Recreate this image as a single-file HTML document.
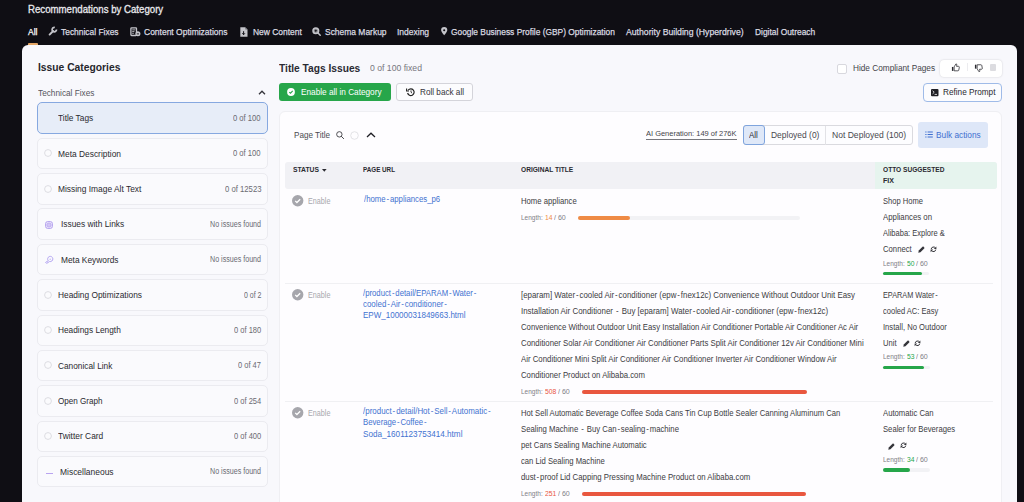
<!DOCTYPE html>
<html><head><meta charset="utf-8"><style>
html,body{margin:0;padding:0;}
body{width:1024px;height:502px;overflow:hidden;position:relative;background:#0f0e14;font-family:"Liberation Sans",sans-serif;}
.t{position:absolute;white-space:nowrap;transform-origin:0 0;}
svg{position:absolute;overflow:visible;}
</style></head><body>
<svg style="left:48px;top:26px" width="10" height="10" viewBox="0 0 10 10"><path d="M1.6 8.6L5.2 5" stroke="#c4c4ca" stroke-width="1.9" stroke-linecap="round"/><path d="M8.5 3.6A2.2 2.2 0 1 1 6.8 1.5" fill="none" stroke="#c4c4ca" stroke-width="1.7"/></svg>
<svg style="left:129.5px;top:26.8px" width="11" height="10" viewBox="0 0 11 10"><rect x="0.9" y="0.9" width="5.6" height="7.6" rx="0.7" fill="none" stroke="#c4c4ca" stroke-width="1.3"/><path d="M2.2 2.9h3.2M2.2 4.6h2.2M2.2 6.3h1.6" stroke="#c4c4ca" stroke-width="0.9"/><circle cx="7.9" cy="6.8" r="2.5" fill="#c4c4ca"/><path d="M6.8 6.9h2.2" stroke="#0f0e14" stroke-width="0.9"/></svg>
<svg style="left:239.8px;top:26.7px" width="8" height="10" viewBox="0 0 8 10"><path d="M0.3 0.3h4.9l2.3 2.3v7.1H0.3z" fill="#c4c4ca"/><path d="M5.4 0.5v2.1h2.1" fill="#6a6a70"/><path d="M3.6 4.2v3.4M2.3 6.3l1.3 1.4l1.3-1.4" stroke="#0f0e14" stroke-width="1" fill="none"/></svg>
<svg style="left:311.8px;top:26.6px" width="9" height="9" viewBox="0 0 9 9"><circle cx="3.8" cy="3.8" r="2.8" fill="#8a8a90" stroke="#c4c4ca" stroke-width="1.5"/><path d="M3.8 2.4L4.3 3.3L5.2 3.8L4.3 4.3L3.8 5.2L3.3 4.3L2.4 3.8L3.3 3.3z" fill="#0f0e14"/><path d="M6 6l2.2 2.2" stroke="#c4c4ca" stroke-width="1.5" stroke-linecap="round"/></svg>
<svg style="left:440.8px;top:27px" width="6.4" height="8.4" viewBox="0 0 6.4 8.4"><path d="M3.2 8.3C1.3 6 0.1 4.6 0.1 3.1A3.1 3.1 0 0 1 6.3 3.1C6.3 4.6 5.1 6 3.2 8.3z" fill="#c4c4ca"/><circle cx="3.2" cy="3.2" r="1.05" fill="#0f0e14"/></svg>
<div style="position:absolute;left:28px;top:42.5px;width:10px;height:3.0px;background:#e5a766;border-radius:1px 1px 0 0;"></div>
<div style="position:absolute;left:22px;top:45px;width:995px;height:495px;background:#f8f8fc;border-radius:6px;"></div>
<svg style="left:257.6px;top:90px" width="8" height="5" viewBox="0 0 8 5"><path d="M1 4.2L4 1.2L7 4.2" fill="none" stroke="#33333a" stroke-width="1.3"/></svg>
<div style="position:absolute;left:37px;top:102.4px;width:230.5px;height:31.599999999999994px;box-sizing:border-box;background:#e7edf8;border:1px solid #86a8e0;border-radius:5px;"></div>
<div style="position:absolute;left:37px;top:137.76px;width:230.5px;height:31.400000000000006px;box-sizing:border-box;background:#fafafd;border:1px solid #ebebf0;border-radius:5px;"></div>
<svg style="left:44px;top:149.26px" width="8" height="8" viewBox="0 0 8 8"><circle cx="4" cy="4" r="3.4" fill="#fbfbfd" stroke="#d6d6dc" stroke-width="0.8"/></svg>
<div style="position:absolute;left:37px;top:173.12px;width:230.5px;height:31.400000000000006px;box-sizing:border-box;background:#fafafd;border:1px solid #ebebf0;border-radius:5px;"></div>
<svg style="left:44px;top:184.62px" width="8" height="8" viewBox="0 0 8 8"><circle cx="4" cy="4" r="3.4" fill="#fbfbfd" stroke="#d6d6dc" stroke-width="0.8"/></svg>
<div style="position:absolute;left:37px;top:208.48000000000002px;width:230.5px;height:31.400000000000006px;box-sizing:border-box;background:#fafafd;border:1px solid #ebebf0;border-radius:5px;"></div>
<svg style="left:45px;top:221.28px" width="8" height="8" viewBox="0 0 8 8"><rect x="0.6" y="0.6" width="6.8" height="6.8" rx="2" fill="#ece6fb" stroke="#b3a0ee" stroke-width="1"/><rect x="2" y="2.2" width="4" height="3.6" rx="1.4" fill="#d3c6f6" stroke="#b3a0ee" stroke-width="0.7"/></svg>
<div style="position:absolute;left:37px;top:243.84px;width:230.5px;height:31.400000000000006px;box-sizing:border-box;background:#fafafd;border:1px solid #ebebf0;border-radius:5px;"></div>
<svg style="left:45px;top:255.74px" width="8" height="8" viewBox="0 0 8 8"><path d="M3.3 4.7A2.6 2.6 0 1 1 4.6 5.5L1.6 7.4L0.6 6.4z" fill="none" stroke="#ab9cef" stroke-width="0.9" stroke-linejoin="round"/><circle cx="5.2" cy="3.2" r="0.8" fill="#c9bdf5"/></svg>
<div style="position:absolute;left:37px;top:279.20000000000005px;width:230.5px;height:31.399999999999977px;box-sizing:border-box;background:#fafafd;border:1px solid #ebebf0;border-radius:5px;"></div>
<svg style="left:44px;top:290.70px" width="8" height="8" viewBox="0 0 8 8"><circle cx="4" cy="4" r="3.4" fill="#fbfbfd" stroke="#d6d6dc" stroke-width="0.8"/></svg>
<div style="position:absolute;left:37px;top:314.56px;width:230.5px;height:31.399999999999977px;box-sizing:border-box;background:#fafafd;border:1px solid #ebebf0;border-radius:5px;"></div>
<svg style="left:44px;top:326.06px" width="8" height="8" viewBox="0 0 8 8"><circle cx="4" cy="4" r="3.4" fill="#fbfbfd" stroke="#d6d6dc" stroke-width="0.8"/></svg>
<div style="position:absolute;left:37px;top:349.91999999999996px;width:230.5px;height:31.399999999999977px;box-sizing:border-box;background:#fafafd;border:1px solid #ebebf0;border-radius:5px;"></div>
<svg style="left:44px;top:361.42px" width="8" height="8" viewBox="0 0 8 8"><circle cx="4" cy="4" r="3.4" fill="#fbfbfd" stroke="#d6d6dc" stroke-width="0.8"/></svg>
<div style="position:absolute;left:37px;top:385.28px;width:230.5px;height:31.399999999999977px;box-sizing:border-box;background:#fafafd;border:1px solid #ebebf0;border-radius:5px;"></div>
<svg style="left:44px;top:396.78px" width="8" height="8" viewBox="0 0 8 8"><circle cx="4" cy="4" r="3.4" fill="#fbfbfd" stroke="#d6d6dc" stroke-width="0.8"/></svg>
<div style="position:absolute;left:37px;top:420.64px;width:230.5px;height:31.399999999999977px;box-sizing:border-box;background:#fafafd;border:1px solid #ebebf0;border-radius:5px;"></div>
<svg style="left:44px;top:432.14px" width="8" height="8" viewBox="0 0 8 8"><circle cx="4" cy="4" r="3.4" fill="#fbfbfd" stroke="#d6d6dc" stroke-width="0.8"/></svg>
<div style="position:absolute;left:37px;top:456.0px;width:230.5px;height:31.399999999999977px;box-sizing:border-box;background:#fafafd;border:1px solid #ebebf0;border-radius:5px;"></div>
<div style="position:absolute;left:45.5px;top:472.5px;width:7.5px;height:1.1999999999999886px;background:#b9a4f0;"></div>
<div style="position:absolute;left:279px;top:83px;width:112px;height:18px;background:#27a64a;border-radius:3px;"></div>
<svg style="left:287.4px;top:88px" width="8" height="8" viewBox="0 0 8 8"><circle cx="4" cy="4" r="3.9" fill="#fff"/><path d="M2.3 4.1L3.5 5.2L5.7 2.9" fill="none" stroke="#27a64a" stroke-width="1.1"/></svg>
<div style="position:absolute;left:396.3px;top:83px;width:76.69999999999999px;height:18px;box-sizing:border-box;background:#fcfcfe;border:1px solid #d4d4da;border-radius:3px;"></div>
<svg style="left:405.5px;top:88px" width="9" height="8" viewBox="0 0 9 8"><path d="M2.2 2.2 A3.3 3.3 0 1 1 1.6 5" fill="none" stroke="#222" stroke-width="1.2"/><path d="M0.6 0.6v2.4h2.4" fill="none" stroke="#222" stroke-width="1.1"/><path d="M5 2.4v1.8l1.1 1" fill="none" stroke="#222" stroke-width="0.9"/></svg>
<div style="position:absolute;left:837.3px;top:64.2px;width:9.5px;height:9.399999999999991px;box-sizing:border-box;background:#fff;border:1px solid #d8d8de;border-radius:2px;"></div>
<div style="position:absolute;left:940.4px;top:60px;width:61.80000000000007px;height:17.200000000000003px;background:#fff;border-radius:4px;box-shadow:0 0 2px rgba(0,0,0,0.18);"></div>
<svg style="left:950.8px;top:62.6px" width="9.4" height="8.6" viewBox="0 0 10 10"><path d="M0.6 4.6h1.7v4.6H0.6z" fill="#2a2a30"/><path d="M3.2 4.5L5.3 1C6.1 1 6.5 1.6 6.3 2.4L6 3.9H8.4C9 3.9 9.3 4.4 9.2 5L8.6 8.3C8.5 8.8 8.1 9.1 7.6 9.1H3.2z" fill="none" stroke="#2a2a30" stroke-width="0.9"/></svg>
<div style="position:absolute;left:967px;top:62.7px;width:0.6000000000000227px;height:8.799999999999997px;background:#ececef;"></div>
<svg style="left:973.9px;top:63.8px" width="9.4" height="8.6" viewBox="0 0 10 10"><g transform="translate(0 10) scale(1 -1)"><path d="M0.6 4.6h1.7v4.6H0.6z" fill="#2a2a30"/><path d="M3.2 4.5L5.3 1C6.1 1 6.5 1.6 6.3 2.4L6 3.9H8.4C9 3.9 9.3 4.4 9.2 5L8.6 8.3C8.5 8.8 8.1 9.1 7.6 9.1H3.2z" fill="none" stroke="#2a2a30" stroke-width="0.9"/></g></svg>
<div style="position:absolute;left:989.8px;top:64.2px;width:6.2000000000000455px;height:6.3999999999999915px;background:#dcdce0;border-radius:1px;"></div>
<div style="position:absolute;left:923px;top:83.1px;width:79px;height:18.5px;box-sizing:border-box;background:#fcfcfe;border:1px solid #9fbbe8;border-radius:4px;"></div>
<svg style="left:930.7px;top:89.2px" width="7.5" height="7.2" viewBox="0 0 7.5 7.2"><rect x="0" y="0" width="7.5" height="7.2" rx="1" fill="#1e1e24"/><path d="M1.6 1.8L3.2 3.3L1.6 4.8M3.6 5.4h2.4" fill="none" stroke="#fff" stroke-width="0.8"/></svg>
<div style="position:absolute;left:278.6px;top:111px;width:723.9px;height:449px;box-sizing:border-box;background:#fefdff;border:1px solid #efeff3;border-radius:6px;"></div>
<svg style="left:335.6px;top:130.6px" width="8.4" height="8.4" viewBox="0 0 9 9"><circle cx="3.6" cy="3.6" r="2.9" fill="none" stroke="#3a3a40" stroke-width="0.95"/><path d="M5.8 5.8L8.2 8.2" stroke="#3a3a40" stroke-width="1" stroke-linecap="round"/></svg>
<svg style="left:349.5px;top:131px" width="9" height="9" viewBox="0 0 9 9"><circle cx="4.5" cy="4.5" r="3.8" fill="none" stroke="#dcdce0" stroke-width="0.8"/></svg>
<svg style="left:365.9px;top:131.8px" width="10" height="6" viewBox="0 0 10 6"><path d="M1 5L5 1.2L9 5" fill="none" stroke="#1e1e24" stroke-width="1.25"/></svg>
<div style="position:absolute;left:646px;top:138.8px;width:91px;height:1.5999999999999943px;background:#78787e;"></div>
<div style="position:absolute;left:743.2px;top:125.2px;width:169.39999999999998px;height:19.799999999999997px;box-sizing:border-box;background:#fdfdff;border:1px solid #dadadf;border-radius:3px;"></div>
<div style="position:absolute;left:743.2px;top:125.2px;width:21.799999999999955px;height:19.799999999999997px;box-sizing:border-box;background:#dfe8f8;border:1px solid #7fa4dd;border-radius:3px;"></div>
<div style="position:absolute;left:825.2px;top:125.5px;width:0.7999999999999545px;height:19.099999999999994px;background:#e2e2e6;"></div>
<div style="position:absolute;left:918.2px;top:121.8px;width:70.09999999999991px;height:26.200000000000003px;background:#dee7f8;border-radius:3px;"></div>
<svg style="left:925.3px;top:131.3px" width="8" height="7" viewBox="0 0 8 7"><path d="M0.3 1h1.2M0.3 3.5h1.2M0.3 6h1.2M2.6 1h5.2M2.6 3.5h5.2M2.6 6h5.2" stroke="#3e6fd0" stroke-width="1"/></svg>
<div style="position:absolute;left:285px;top:161.8px;width:712px;height:27.19999999999999px;background:#f1f1f5;border-radius:3px;"></div>
<div style="position:absolute;left:874.6px;top:161.8px;width:122.39999999999998px;height:27.19999999999999px;background:#e6f4ee;border-radius:0 3px 3px 0;"></div>
<svg style="left:321.8px;top:169px" width="5" height="3" viewBox="0 0 5 3"><path d="M0 0h4.6L2.3 2.8z" fill="#2a2a30"/></svg>
<svg style="left:292.3px;top:195.30px" width="11.4" height="11.4" viewBox="0 0 11.4 11.4"><circle cx="5.7" cy="5.7" r="5.7" fill="#a6a6ac"/><path d="M3.2 5.9L4.9 7.5L8.2 4.2" fill="none" stroke="#fff" stroke-width="1.3"/></svg>
<div style="position:absolute;left:577.5px;top:216.25px;width:222.5px;height:3.5px;background:#f2f2f5;border-radius:2px;"></div>
<div style="position:absolute;left:577.5px;top:216.25px;width:52.5px;height:3.5px;background:#ef8b45;border-radius:2px;"></div>
<svg style="left:918px;top:245.90px" width="7" height="7" viewBox="0 0 10 10"><path d="M0.4 9.6L1.1 6.5L7.2 0.5L9.5 2.8L3.5 8.9z" fill="#34343a"/></svg>
<svg style="left:929.6px;top:245.70px" width="7" height="6.6" viewBox="0 0 10 10"><path d="M1.5 4.6A3.6 3.6 0 0 1 8 3" fill="none" stroke="#34343a" stroke-width="1.5"/><path d="M9.4 0.6V4.6H5.4z" fill="#34343a"/><path d="M8.5 5.4A3.6 3.6 0 0 1 2 7" fill="none" stroke="#34343a" stroke-width="1.5"/><path d="M0.6 9.4V5.4H4.6z" fill="#34343a"/></svg>
<div style="position:absolute;left:883px;top:271.55px;width:46px;height:3.5px;background:#f2f2f5;border-radius:2px;"></div>
<div style="position:absolute;left:883px;top:271.55px;width:38.5px;height:3.5px;background:#26a64a;border-radius:2px;"></div>
<div style="position:absolute;left:285px;top:282.6px;width:708px;height:0.7999999999999545px;background:#f0f0f3;"></div>
<svg style="left:292.3px;top:289.30px" width="11.4" height="11.4" viewBox="0 0 11.4 11.4"><circle cx="5.7" cy="5.7" r="5.7" fill="#a6a6ac"/><path d="M3.2 5.9L4.9 7.5L8.2 4.2" fill="none" stroke="#fff" stroke-width="1.3"/></svg>
<div style="position:absolute;left:582px;top:390.05px;width:224.5px;height:3.5px;background:#f2f2f5;border-radius:2px;"></div>
<div style="position:absolute;left:582px;top:390.05px;width:224.5px;height:3.5px;background:#e9573f;border-radius:2px;"></div>
<svg style="left:902.8px;top:340.10px" width="7" height="7" viewBox="0 0 10 10"><path d="M0.4 9.6L1.1 6.5L7.2 0.5L9.5 2.8L3.5 8.9z" fill="#34343a"/></svg>
<svg style="left:914.4px;top:339.90px" width="7" height="6.6" viewBox="0 0 10 10"><path d="M1.5 4.6A3.6 3.6 0 0 1 8 3" fill="none" stroke="#34343a" stroke-width="1.5"/><path d="M9.4 0.6V4.6H5.4z" fill="#34343a"/><path d="M8.5 5.4A3.6 3.6 0 0 1 2 7" fill="none" stroke="#34343a" stroke-width="1.5"/><path d="M0.6 9.4V5.4H4.6z" fill="#34343a"/></svg>
<div style="position:absolute;left:883px;top:365.65px;width:46.700000000000045px;height:3.5px;background:#f2f2f5;border-radius:2px;"></div>
<div style="position:absolute;left:883px;top:365.65px;width:41.299999999999955px;height:3.5px;background:#26a64a;border-radius:2px;"></div>
<div style="position:absolute;left:285px;top:400.9px;width:708px;height:0.8000000000000114px;background:#f0f0f3;"></div>
<svg style="left:292.3px;top:407.30px" width="11.4" height="11.4" viewBox="0 0 11.4 11.4"><circle cx="5.7" cy="5.7" r="5.7" fill="#a6a6ac"/><path d="M3.2 5.9L4.9 7.5L8.2 4.2" fill="none" stroke="#fff" stroke-width="1.3"/></svg>
<div style="position:absolute;left:582.3px;top:492.45px;width:224.0px;height:3.5px;background:#f2f2f5;border-radius:2px;"></div>
<div style="position:absolute;left:582.3px;top:492.45px;width:224.0px;height:3.5px;background:#e9573f;border-radius:2px;"></div>
<svg style="left:888px;top:442.50px" width="7" height="7" viewBox="0 0 10 10"><path d="M0.4 9.6L1.1 6.5L7.2 0.5L9.5 2.8L3.5 8.9z" fill="#34343a"/></svg>
<svg style="left:899.6px;top:442.30px" width="7" height="6.6" viewBox="0 0 10 10"><path d="M1.5 4.6A3.6 3.6 0 0 1 8 3" fill="none" stroke="#34343a" stroke-width="1.5"/><path d="M9.4 0.6V4.6H5.4z" fill="#34343a"/><path d="M8.5 5.4A3.6 3.6 0 0 1 2 7" fill="none" stroke="#34343a" stroke-width="1.5"/><path d="M0.6 9.4V5.4H4.6z" fill="#34343a"/></svg>
<div style="position:absolute;left:883px;top:468.25px;width:47px;height:3.5px;background:#f2f2f5;border-radius:2px;"></div>
<div style="position:absolute;left:883px;top:468.25px;width:26.700000000000045px;height:3.5px;background:#26a64a;border-radius:2px;"></div>
<div class="t" style="left:28.00px;top:2.57px;font-size:10.81px;line-height:12.97px;color:#e8e8ec;font-weight:normal;transform:scaleX(0.8940);-webkit-text-stroke:0.32px currentColor;">Recommendations by Category</div>
<div class="t" style="left:28.00px;top:26.16px;font-size:9.66px;line-height:11.59px;color:#ffffff;font-weight:normal;transform:scaleX(0.8876);-webkit-text-stroke:0.25px currentColor;">All</div>
<div class="t" style="left:61.00px;top:26.16px;font-size:9.66px;line-height:11.59px;color:#dcdce2;font-weight:normal;transform:scaleX(0.8719);-webkit-text-stroke:0.25px currentColor;">Technical Fixes</div>
<div class="t" style="left:143.80px;top:26.16px;font-size:9.66px;line-height:11.59px;color:#dcdce2;font-weight:normal;transform:scaleX(0.8791);-webkit-text-stroke:0.25px currentColor;">Content Optimizations</div>
<div class="t" style="left:252.60px;top:26.16px;font-size:9.66px;line-height:11.59px;color:#dcdce2;font-weight:normal;transform:scaleX(0.8747);-webkit-text-stroke:0.25px currentColor;">New Content</div>
<div class="t" style="left:324.70px;top:26.16px;font-size:9.66px;line-height:11.59px;color:#dcdce2;font-weight:normal;transform:scaleX(0.8756);-webkit-text-stroke:0.25px currentColor;">Schema Markup</div>
<div class="t" style="left:397.30px;top:26.16px;font-size:9.66px;line-height:11.59px;color:#dcdce2;font-weight:normal;transform:scaleX(0.8788);-webkit-text-stroke:0.25px currentColor;">Indexing</div>
<div class="t" style="left:451.00px;top:26.16px;font-size:9.66px;line-height:11.59px;color:#dcdce2;font-weight:normal;transform:scaleX(0.8672);-webkit-text-stroke:0.25px currentColor;">Google Business Profile (GBP) Optimization</div>
<div class="t" style="left:626.00px;top:26.16px;font-size:9.66px;line-height:11.59px;color:#dcdce2;font-weight:normal;transform:scaleX(0.8981);-webkit-text-stroke:0.25px currentColor;">Authority Building (Hyperdrive)</div>
<div class="t" style="left:755.00px;top:26.16px;font-size:9.66px;line-height:11.59px;color:#dcdce2;font-weight:normal;transform:scaleX(0.8689);-webkit-text-stroke:0.25px currentColor;">Digital Outreach</div>
<div class="t" style="left:37.60px;top:60.66px;font-size:10.71px;line-height:12.85px;color:#26262c;font-weight:bold;transform:scaleX(0.9616);">Issue Categories</div>
<div class="t" style="left:37.50px;top:87.17px;font-size:9.54px;line-height:11.45px;color:#55555c;font-weight:normal;transform:scaleX(0.8667);">Technical Fixes</div>
<div class="t" style="left:58.30px;top:112.17px;font-size:9.54px;line-height:11.45px;color:#2a2a30;font-weight:normal;transform:scaleX(0.8751);">Title Tags</div>
<div class="t" style="left:233.40px;top:112.83px;font-size:8.74px;line-height:10.49px;color:#6a6a72;font-weight:normal;transform:scaleX(0.8745);">0 of 100</div>
<div class="t" style="left:58.30px;top:147.53px;font-size:9.54px;line-height:11.45px;color:#2a2a30;font-weight:normal;transform:scaleX(0.8805);">Meta Description</div>
<div class="t" style="left:233.40px;top:148.19px;font-size:8.74px;line-height:10.49px;color:#6a6a72;font-weight:normal;transform:scaleX(0.8745);">0 of 100</div>
<div class="t" style="left:58.30px;top:182.89px;font-size:9.54px;line-height:11.45px;color:#2a2a30;font-weight:normal;transform:scaleX(0.8805);">Missing Image Alt Text</div>
<div class="t" style="left:224.50px;top:183.55px;font-size:8.74px;line-height:10.49px;color:#6a6a72;font-weight:normal;transform:scaleX(0.8843);">0 of 12523</div>
<div class="t" style="left:60.50px;top:218.25px;font-size:9.54px;line-height:11.45px;color:#2a2a30;font-weight:normal;transform:scaleX(0.8768);">Issues with Links</div>
<div class="t" style="left:210.00px;top:218.91px;font-size:8.74px;line-height:10.49px;color:#6a6a72;font-weight:normal;transform:scaleX(0.8144);">No issues found</div>
<div class="t" style="left:60.50px;top:253.61px;font-size:9.54px;line-height:11.45px;color:#2a2a30;font-weight:normal;transform:scaleX(0.8749);">Meta Keywords</div>
<div class="t" style="left:210.00px;top:254.27px;font-size:8.74px;line-height:10.49px;color:#6a6a72;font-weight:normal;transform:scaleX(0.8144);">No issues found</div>
<div class="t" style="left:58.30px;top:288.97px;font-size:9.54px;line-height:11.45px;color:#2a2a30;font-weight:normal;transform:scaleX(0.8755);">Heading Optimizations</div>
<div class="t" style="left:243.50px;top:289.63px;font-size:8.74px;line-height:10.49px;color:#6a6a72;font-weight:normal;transform:scaleX(0.8009);">0 of 2</div>
<div class="t" style="left:58.30px;top:324.33px;font-size:9.54px;line-height:11.45px;color:#2a2a30;font-weight:normal;transform:scaleX(0.8709);">Headings Length</div>
<div class="t" style="left:233.80px;top:324.99px;font-size:8.74px;line-height:10.49px;color:#6a6a72;font-weight:normal;transform:scaleX(0.8618);">0 of 180</div>
<div class="t" style="left:58.30px;top:359.69px;font-size:9.54px;line-height:11.45px;color:#2a2a30;font-weight:normal;transform:scaleX(0.8696);">Canonical Link</div>
<div class="t" style="left:238.10px;top:360.35px;font-size:8.74px;line-height:10.49px;color:#6a6a72;font-weight:normal;transform:scaleX(0.8575);">0 of 47</div>
<div class="t" style="left:58.30px;top:395.05px;font-size:9.54px;line-height:11.45px;color:#2a2a30;font-weight:normal;transform:scaleX(0.8498);">Open Graph</div>
<div class="t" style="left:233.80px;top:395.71px;font-size:8.74px;line-height:10.49px;color:#6a6a72;font-weight:normal;transform:scaleX(0.8618);">0 of 254</div>
<div class="t" style="left:58.30px;top:430.41px;font-size:9.54px;line-height:11.45px;color:#2a2a30;font-weight:normal;transform:scaleX(0.8813);">Twitter Card</div>
<div class="t" style="left:233.80px;top:431.07px;font-size:8.74px;line-height:10.49px;color:#6a6a72;font-weight:normal;transform:scaleX(0.8618);">0 of 400</div>
<div class="t" style="left:60.20px;top:465.77px;font-size:9.54px;line-height:11.45px;color:#2a2a30;font-weight:normal;transform:scaleX(0.8870);">Miscellaneous</div>
<div class="t" style="left:210.00px;top:466.43px;font-size:8.74px;line-height:10.49px;color:#6a6a72;font-weight:normal;transform:scaleX(0.8144);">No issues found</div>
<div class="t" style="left:279.40px;top:60.50px;font-size:11.73px;line-height:14.08px;color:#2a2a32;font-weight:bold;transform:scaleX(0.8700);">Title Tags Issues</div>
<div class="t" style="left:370.00px;top:62.04px;font-size:9.89px;line-height:11.87px;color:#77777e;font-weight:normal;transform:scaleX(0.8763);">0 of 100 fixed</div>
<div class="t" style="left:301.30px;top:86.17px;font-size:9.43px;line-height:11.32px;color:#ffffff;font-weight:normal;transform:scaleX(0.8739);">Enable all in Category</div>
<div class="t" style="left:419.80px;top:86.27px;font-size:9.43px;line-height:11.32px;color:#33333a;font-weight:normal;transform:scaleX(0.8668);">Roll back all</div>
<div class="t" style="left:852.80px;top:62.17px;font-size:9.43px;line-height:11.32px;color:#44444a;font-weight:normal;transform:scaleX(0.8753);">Hide Compliant Pages</div>
<div class="t" style="left:942.50px;top:86.47px;font-size:9.43px;line-height:11.32px;color:#2a2a30;font-weight:normal;transform:scaleX(0.8707);">Refine Prompt</div>
<div class="t" style="left:293.50px;top:129.69px;font-size:9.2px;line-height:11.04px;color:#4a4a50;font-weight:normal;transform:scaleX(0.8836);">Page Title</div>
<div class="t" style="left:646.20px;top:130.25px;font-size:6.6px;line-height:7.92px;color:#44444a;font-weight:normal;transform:scaleX(1.1325);">AI Generation: 149 of 276K</div>
<div class="t" style="left:749.30px;top:129.26px;font-size:9.66px;line-height:11.59px;color:#2a2a30;font-weight:normal;transform:scaleX(0.8222);">All</div>
<div class="t" style="left:771.00px;top:129.46px;font-size:9.66px;line-height:11.59px;color:#48484e;font-weight:normal;transform:scaleX(0.8760);">Deployed (0)</div>
<div class="t" style="left:832.00px;top:129.46px;font-size:9.66px;line-height:11.59px;color:#48484e;font-weight:normal;transform:scaleX(0.8861);">Not Deployed (100)</div>
<div class="t" style="left:936.30px;top:128.77px;font-size:9.54px;line-height:11.45px;color:#3e6fd0;font-weight:normal;transform:scaleX(0.8694);">Bulk actions</div>
<div class="t" style="left:293.00px;top:165.40px;font-size:7.82px;line-height:9.38px;color:#2a2a30;font-weight:bold;transform:scaleX(0.8636);">STATUS</div>
<div class="t" style="left:363.20px;top:165.40px;font-size:7.82px;line-height:9.38px;color:#2a2a30;font-weight:bold;transform:scaleX(0.8039);">PAGE URL</div>
<div class="t" style="left:521.00px;top:165.40px;font-size:7.82px;line-height:9.38px;color:#2a2a30;font-weight:bold;transform:scaleX(0.8439);">ORIGINAL TITLE</div>
<div class="t" style="left:883.00px;top:165.30px;font-size:7.82px;line-height:9.38px;color:#2a2a30;font-weight:bold;transform:scaleX(0.8446);">OTTO SUGGESTED</div>
<div class="t" style="left:883.00px;top:176.00px;font-size:7.82px;line-height:9.38px;color:#2a2a30;font-weight:bold;transform:scaleX(0.9046);">FIX</div>
<div class="t" style="left:307.60px;top:196.24px;font-size:8.62px;line-height:10.34px;color:#a8a8ae;font-weight:normal;transform:scaleX(0.8346);">Enable</div>
<div class="t" style="left:363.50px;top:193.59px;font-size:9.2px;line-height:11.04px;color:#4272d0;font-weight:normal;transform:scaleX(0.8474);">/home<span style="margin:0 1.03px">-</span>appliances_p6</div>
<div class="t" style="left:521.00px;top:195.91px;font-size:8.97px;line-height:10.76px;color:#3c3c42;font-weight:normal;transform:scaleX(0.8596);">Home appliance</div>
<div class="t" style="left:521.00px;top:213.22px;font-size:7.59px;line-height:9.11px;color:#808086;font-weight:normal;transform:scaleX(0.8577);">Length:</div>
<div class="t" style="left:544.60px;top:213.22px;font-size:7.59px;line-height:9.11px;color:#ef8b45;font-weight:normal;transform:scaleX(0.8892);">14</div>
<div class="t" style="left:554.00px;top:213.22px;font-size:7.59px;line-height:9.11px;color:#808086;font-weight:normal;transform:scaleX(0.9330);">/ 60</div>
<div class="t" style="left:883.00px;top:196.11px;font-size:8.97px;line-height:10.76px;color:#3c3c42;font-weight:normal;transform:scaleX(0.8448);">Shop Home</div>
<div class="t" style="left:883.00px;top:212.04px;font-size:8.97px;line-height:10.76px;color:#3c3c42;font-weight:normal;transform:scaleX(0.8699);">Appliances on</div>
<div class="t" style="left:883.00px;top:227.97px;font-size:8.97px;line-height:10.76px;color:#3c3c42;font-weight:normal;transform:scaleX(0.8378);">Alibaba: Explore &amp;</div>
<div class="t" style="left:883.00px;top:243.90px;font-size:8.97px;line-height:10.76px;color:#3c3c42;font-weight:normal;transform:scaleX(0.8594);">Connect</div>
<div class="t" style="left:883.00px;top:258.72px;font-size:7.59px;line-height:9.11px;color:#808086;font-weight:normal;transform:scaleX(0.8577);">Length:</div>
<div class="t" style="left:906.60px;top:258.72px;font-size:7.59px;line-height:9.11px;color:#26a64a;font-weight:normal;transform:scaleX(0.8892);">50</div>
<div class="t" style="left:916.00px;top:258.72px;font-size:7.59px;line-height:9.11px;color:#808086;font-weight:normal;transform:scaleX(0.9330);">/ 60</div>
<div class="t" style="left:307.60px;top:290.04px;font-size:8.62px;line-height:10.34px;color:#a8a8ae;font-weight:normal;transform:scaleX(0.8346);">Enable</div>
<div class="t" style="left:363.00px;top:287.99px;font-size:9.2px;line-height:11.04px;color:#4272d0;font-weight:normal;transform:scaleX(0.8439);">/product<span style="margin:0 1.03px">-</span>detail/EPARAM<span style="margin:0 1.03px">-</span>Water<span style="margin:0 1.03px">-</span></div>
<div class="t" style="left:363.00px;top:298.99px;font-size:9.2px;line-height:11.04px;color:#4272d0;font-weight:normal;transform:scaleX(0.8607);">cooled<span style="margin:0 1.03px">-</span>Air<span style="margin:0 1.03px">-</span>conditioner<span style="margin:0 1.03px">-</span></div>
<div class="t" style="left:363.00px;top:309.99px;font-size:9.2px;line-height:11.04px;color:#4272d0;font-weight:normal;transform:scaleX(0.8730);">EPW_10000031849663.html</div>
<div class="t" style="left:521.00px;top:289.71px;font-size:8.97px;line-height:10.76px;color:#3c3c42;font-weight:normal;transform:scaleX(0.8798);">[eparam] Water<span style="margin:0 1.01px">-</span>cooled Air<span style="margin:0 1.01px">-</span>conditioner (epw<span style="margin:0 1.01px">-</span>fnex12c) Convenience Without Outdoor Unit Easy</div>
<div class="t" style="left:521.00px;top:305.75px;font-size:8.97px;line-height:10.76px;color:#3c3c42;font-weight:normal;transform:scaleX(0.8822);">Installation Air Conditioner <span style="margin:0 1.01px">-</span> Buy [eparam] Water<span style="margin:0 1.01px">-</span>cooled Air<span style="margin:0 1.01px">-</span>conditioner (epw<span style="margin:0 1.01px">-</span>fnex12c)</div>
<div class="t" style="left:521.00px;top:321.79px;font-size:8.97px;line-height:10.76px;color:#3c3c42;font-weight:normal;transform:scaleX(0.8638);">Convenience Without Outdoor Unit Easy Installation Air Conditioner Portable Air Conditioner Ac Air</div>
<div class="t" style="left:521.00px;top:337.83px;font-size:8.97px;line-height:10.76px;color:#3c3c42;font-weight:normal;transform:scaleX(0.8701);">Conditioner Solar Air Conditioner Air Conditioner Parts Split Air Conditioner 12v Air Conditioner Mini</div>
<div class="t" style="left:521.00px;top:353.87px;font-size:8.97px;line-height:10.76px;color:#3c3c42;font-weight:normal;transform:scaleX(0.8710);">Air Conditioner Mini Split Air Conditioner Air Conditioner Inverter Air Conditioner Window Air</div>
<div class="t" style="left:521.00px;top:369.91px;font-size:8.97px;line-height:10.76px;color:#3c3c42;font-weight:normal;transform:scaleX(0.8659);">Conditioner Product on Alibaba.com</div>
<div class="t" style="left:521.00px;top:386.82px;font-size:7.59px;line-height:9.11px;color:#808086;font-weight:normal;transform:scaleX(0.8577);">Length:</div>
<div class="t" style="left:544.60px;top:386.82px;font-size:7.59px;line-height:9.11px;color:#e9573f;font-weight:normal;transform:scaleX(0.9011);">508</div>
<div class="t" style="left:557.90px;top:386.82px;font-size:7.59px;line-height:9.11px;color:#808086;font-weight:normal;transform:scaleX(0.9330);">/ 60</div>
<div class="t" style="left:883.00px;top:290.01px;font-size:8.97px;line-height:10.76px;color:#3c3c42;font-weight:normal;transform:scaleX(0.8143);">EPARAM Water<span style="margin:0 1.01px">-</span></div>
<div class="t" style="left:883.00px;top:306.01px;font-size:8.97px;line-height:10.76px;color:#3c3c42;font-weight:normal;transform:scaleX(0.8388);">cooled AC: Easy</div>
<div class="t" style="left:883.00px;top:322.01px;font-size:8.97px;line-height:10.76px;color:#3c3c42;font-weight:normal;transform:scaleX(0.8521);">Install, No Outdoor</div>
<div class="t" style="left:883.00px;top:338.01px;font-size:8.97px;line-height:10.76px;color:#3c3c42;font-weight:normal;transform:scaleX(0.8467);">Unit</div>
<div class="t" style="left:883.00px;top:352.32px;font-size:7.59px;line-height:9.11px;color:#808086;font-weight:normal;transform:scaleX(0.8577);">Length:</div>
<div class="t" style="left:906.60px;top:352.32px;font-size:7.59px;line-height:9.11px;color:#26a64a;font-weight:normal;transform:scaleX(0.8892);">53</div>
<div class="t" style="left:916.00px;top:352.32px;font-size:7.59px;line-height:9.11px;color:#808086;font-weight:normal;transform:scaleX(0.9330);">/ 60</div>
<div class="t" style="left:307.60px;top:407.84px;font-size:8.62px;line-height:10.34px;color:#a8a8ae;font-weight:normal;transform:scaleX(0.8346);">Enable</div>
<div class="t" style="left:363.00px;top:405.69px;font-size:9.2px;line-height:11.04px;color:#4272d0;font-weight:normal;transform:scaleX(0.8657);">/product<span style="margin:0 1.03px">-</span>detail/Hot<span style="margin:0 1.03px">-</span>Sell<span style="margin:0 1.03px">-</span>Automatic<span style="margin:0 1.03px">-</span></div>
<div class="t" style="left:363.00px;top:417.24px;font-size:9.2px;line-height:11.04px;color:#4272d0;font-weight:normal;transform:scaleX(0.8421);">Beverage<span style="margin:0 1.03px">-</span>Coffee<span style="margin:0 1.03px">-</span></div>
<div class="t" style="left:363.00px;top:428.79px;font-size:9.2px;line-height:11.04px;color:#4272d0;font-weight:normal;transform:scaleX(0.8863);">Soda_1601123753414.html</div>
<div class="t" style="left:521.00px;top:408.11px;font-size:8.97px;line-height:10.76px;color:#3c3c42;font-weight:normal;transform:scaleX(0.8543);">Hot Sell Automatic Beverage Coffee Soda Cans Tin Cup Bottle Sealer Canning Aluminum Can</div>
<div class="t" style="left:521.00px;top:424.01px;font-size:8.97px;line-height:10.76px;color:#3c3c42;font-weight:normal;transform:scaleX(0.8629);">Sealing Machine <span style="margin:0 1.01px">-</span> Buy Can<span style="margin:0 1.01px">-</span>sealing<span style="margin:0 1.01px">-</span>machine</div>
<div class="t" style="left:521.00px;top:439.91px;font-size:8.97px;line-height:10.76px;color:#3c3c42;font-weight:normal;transform:scaleX(0.8576);">pet Cans Sealing Machine Automatic</div>
<div class="t" style="left:521.00px;top:455.81px;font-size:8.97px;line-height:10.76px;color:#3c3c42;font-weight:normal;transform:scaleX(0.8567);">can Lid Sealing Machine</div>
<div class="t" style="left:521.00px;top:471.71px;font-size:8.97px;line-height:10.76px;color:#3c3c42;font-weight:normal;transform:scaleX(0.8691);">dust<span style="margin:0 1.01px">-</span>proof Lid Capping Pressing Machine Product on Alibaba.com</div>
<div class="t" style="left:521.00px;top:489.32px;font-size:7.59px;line-height:9.11px;color:#808086;font-weight:normal;transform:scaleX(0.8577);">Length:</div>
<div class="t" style="left:544.60px;top:489.32px;font-size:7.59px;line-height:9.11px;color:#e9573f;font-weight:normal;transform:scaleX(0.9011);">251</div>
<div class="t" style="left:557.90px;top:489.32px;font-size:7.59px;line-height:9.11px;color:#808086;font-weight:normal;transform:scaleX(0.9330);">/ 60</div>
<div class="t" style="left:883.00px;top:407.71px;font-size:8.97px;line-height:10.76px;color:#3c3c42;font-weight:normal;transform:scaleX(0.8604);">Automatic Can</div>
<div class="t" style="left:883.00px;top:423.91px;font-size:8.97px;line-height:10.76px;color:#3c3c42;font-weight:normal;transform:scaleX(0.8548);">Sealer for Beverages</div>
<div class="t" style="left:883.00px;top:454.92px;font-size:7.59px;line-height:9.11px;color:#808086;font-weight:normal;transform:scaleX(0.8577);">Length:</div>
<div class="t" style="left:906.60px;top:454.92px;font-size:7.59px;line-height:9.11px;color:#26a64a;font-weight:normal;transform:scaleX(0.8892);">34</div>
<div class="t" style="left:916.00px;top:454.92px;font-size:7.59px;line-height:9.11px;color:#808086;font-weight:normal;transform:scaleX(0.9330);">/ 60</div>
</body></html>
